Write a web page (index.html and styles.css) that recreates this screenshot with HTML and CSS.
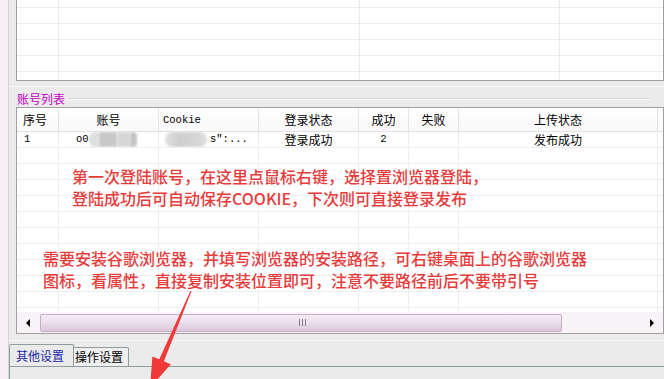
FILE: index.html
```html
<!DOCTYPE html>
<html lang="zh-CN">
<head>
<meta charset="utf-8">
<title>账号列表</title>
<link rel="stylesheet" href="styles.css">
</head>
<body>
<div class="window">
  <div class="frame-left"></div>
  <div class="content">
    <div class="top-area">
      <div class="log-panel">
        <div class="log-row first"><span></span><span></span><span></span><span></span></div>
        <div class="log-row"><span></span><span></span><span></span><span></span></div>
        <div class="log-row"><span></span><span></span><span></span><span></span></div>
        <div class="log-row"><span></span><span></span><span></span><span></span></div>
        <div class="log-row"><span></span><span></span><span></span><span></span></div>
        <div class="log-row last"><span></span><span></span><span></span><span></span></div>
      </div>
    </div>
    <div class="splitter"></div>
    <div class="group-title">
      <span class="group-label">账号列表</span>
      <span class="group-line"></span>
    </div>
    <div class="listview">
      <div class="lv-header">
        <span class="hcell left pad6">序号</span>
        <span class="hcell">账号</span>
        <span class="hcell left pad4 mono">Cookie</span>
        <span class="hcell">登录状态</span>
        <span class="hcell">成功</span>
        <span class="hcell">失败</span>
        <span class="hcell">上传状态</span>
        <span class="hcell end"></span>
      </div>
      <div class="lv-body">
        <div class="lv-row">
          <span class="cell left pad7 mono">1</span>
          <span class="cell left pad17"><span class="mono">o0</span><i class="blob b1"></i><i class="blob b2"></i><i class="blob b3"></i><i class="blob b4"></i></span>
          <span class="cell left pad6"><i class="blob b5"></i><span class="mono tail">s":...</span></span>
          <span class="cell">登录成功</span>
          <span class="cell mono">2</span>
          <span class="cell"></span>
          <span class="cell">发布成功</span>
          <span class="cell end"></span>
        </div>
        <div class="lv-row"><span class="cell"></span><span class="cell"></span><span class="cell"></span><span class="cell"></span><span class="cell"></span><span class="cell"></span><span class="cell"></span><span class="cell end"></span></div>
        <div class="lv-row"><span class="cell"></span><span class="cell"></span><span class="cell"></span><span class="cell"></span><span class="cell"></span><span class="cell"></span><span class="cell"></span><span class="cell end"></span></div>
        <div class="lv-row"><span class="cell"></span><span class="cell"></span><span class="cell"></span><span class="cell"></span><span class="cell"></span><span class="cell"></span><span class="cell"></span><span class="cell end"></span></div>
        <div class="lv-row"><span class="cell"></span><span class="cell"></span><span class="cell"></span><span class="cell"></span><span class="cell"></span><span class="cell"></span><span class="cell"></span><span class="cell end"></span></div>
        <div class="lv-row"><span class="cell"></span><span class="cell"></span><span class="cell"></span><span class="cell"></span><span class="cell"></span><span class="cell"></span><span class="cell"></span><span class="cell end"></span></div>
        <div class="lv-row"><span class="cell"></span><span class="cell"></span><span class="cell"></span><span class="cell"></span><span class="cell"></span><span class="cell"></span><span class="cell"></span><span class="cell end"></span></div>
        <div class="lv-row"><span class="cell"></span><span class="cell"></span><span class="cell"></span><span class="cell"></span><span class="cell"></span><span class="cell"></span><span class="cell"></span><span class="cell end"></span></div>
        <div class="lv-row"><span class="cell"></span><span class="cell"></span><span class="cell"></span><span class="cell"></span><span class="cell"></span><span class="cell"></span><span class="cell"></span><span class="cell end"></span></div>
        <div class="lv-row"><span class="cell"></span><span class="cell"></span><span class="cell"></span><span class="cell"></span><span class="cell"></span><span class="cell"></span><span class="cell"></span><span class="cell end"></span></div>
        <div class="lv-row"><span class="cell"></span><span class="cell"></span><span class="cell"></span><span class="cell"></span><span class="cell"></span><span class="cell"></span><span class="cell"></span><span class="cell end"></span></div>
        <div class="lv-row"><span class="cell"></span><span class="cell"></span><span class="cell"></span><span class="cell"></span><span class="cell"></span><span class="cell"></span><span class="cell"></span><span class="cell end"></span></div>
      </div>
      <div class="hscroll">
        <span class="sb-btn"><i class="tri-left"></i></span>
        <span class="sb-track">
          <span class="sb-thumb"><i class="grip"></i></span>
        </span>
        <span class="sb-btn"><i class="tri-right"></i></span>
      </div>
    </div>
    <div class="tabsep"></div>
    <div class="tabstrip">
      <span class="tab active">其他设置</span>
      <span class="tab">操作设置</span>
    </div>
    <div class="tabpanel"></div>
  </div>
</div>

<div class="annot a1">第一次登陆账号，在这里点鼠标右键，选择置浏览器登陆，<br>登陆成功后可自动保存COOKIE，下次则可直接登录发布</div>
<div class="annot a2">需要安装谷歌浏览器，并填写浏览器的安装路径，可右键桌面上的谷歌浏览器<br>图标，看属性，直接复制安装位置即可，注意不要路径前后不要带引号</div>

<svg class="arrow" width="664" height="379" viewBox="0 0 664 379">
  <polygon points="190.5,290.8 191.5,291.2 163.9,361.3 170.8,364.2 150,388 152.4,356.4 159.3,359.3" fill="#f03a3a"/>
</svg>
</body>
</html>
```

FILE: styles.css
```css
* {
  box-sizing: border-box;
  margin: 0;
  padding: 0;
}

html,
body {
  width: 664px;
  height: 379px;
  overflow: hidden;
}

body {
  position: relative;
  background: #ebebeb;
  font-family: "Noto Sans CJK SC", "Noto Sans", sans-serif;
  font-size: 12px;
  color: #000;
}

.window {
  display: flex;
  height: 379px;
}

.frame-left {
  width: 9px;
  background: #f6f0f6;
  border-right: 1px solid #d4d4d4;
}

.content {
  flex: 1;
  min-width: 0;
  display: flex;
  flex-direction: column;
}

/* top log panel */
.top-area {
  padding-left: 7px;
}

.log-panel {
  height: 81px;
  background: #fff;
  border: 1px solid #a0a0a0;
  border-top: none;
  display: flex;
  flex-direction: column;
}

.log-row {
  display: grid;
  grid-template-columns: 42px 301px 200px 1fr;
  height: 16px;
  border-bottom: 1px solid #ebebeb;
}

.log-row.first {
  height: 8px;
}

.log-row.last {
  height: 8px;
  border-bottom: none;
}

.log-row span {
  border-right: 1px solid #ebebeb;
}

.log-row span:last-child {
  border-right: none;
}

.splitter {
  margin-top: 5px;
  height: 1px;
  background: #f8f8f8;
}

/* group box */
.group-title {
  height: 20px;
  display: flex;
  align-items: flex-start;
  padding-left: 8px;
  padding-top: 5px;
}

.group-label {
  color: #c400c4;
  font-size: 12px;
  line-height: 14px;
}

.group-line {
  flex: 1;
  margin: 6px 14px 0 3px;
  height: 2px;
  border-top: 1px solid #d6d6d6;
  border-bottom: 1px solid #fafafa;
}

/* list view */
.listview {
  margin-left: 7px;
  height: 227px;
  border: 1px solid #a0a0a0;
  background: #fff;
  display: flex;
  flex-direction: column;
}

.lv-header,
.lv-row {
  display: grid;
  grid-template-columns: 42px 100px 100px 100px 50px 50px 199px 1fr;
}

.lv-header {
  height: 24px;
  background: linear-gradient(#ffffff, #faf8fa);
  border-bottom: 1px solid #e3e3e3;
}

.hcell {
  display: flex;
  align-items: center;
  justify-content: center;
  border-right: 1px solid #e3e3e3;
  white-space: nowrap;
}

.lv-body {
  height: 180px;
  overflow: hidden;
}

.lv-row {
  height: 16px;
  border-bottom: 1px solid #ededed;
}

.cell {
  display: flex;
  align-items: center;
  justify-content: center;
  border-right: 1px solid #ededed;
  line-height: 15px;
  white-space: nowrap;
  overflow: hidden;
}

.hcell.end,
.cell.end {
  border-right: none;
}

.left {
  justify-content: flex-start;
}

.pad4 { padding-left: 4px; }
.pad6 { padding-left: 6px; }
.pad7 { padding-left: 7px; }
.pad17 { padding-left: 17px; }

.mono {
  font-family: "Liberation Mono", "DejaVu Sans Mono", monospace;
  font-size: 10.5px;
}

.tail {
  margin-left: 3px;
}

.blob {
  display: inline-block;
  height: 15px;
  filter: blur(1px);
}

.b1 { width: 10px; background: #dedede; border-radius: 6px 0 0 6px; }
.b2 { width: 18px; background: #c8c8c8; }
.b3 { width: 13px; background: #d6d6d6; }
.b4 { width: 7px; background: #c4c4c4; border-radius: 0 4px 4px 0; }
.b5 { width: 42px; background: linear-gradient(90deg, #e2e2e2, #cfcfcf 30%, #d4d4d4 70%, #dedede); border-radius: 7px; }

/* horizontal scrollbar */
.hscroll {
  height: 21px;
  display: flex;
  background: #f7f3f7;
}

.sb-btn {
  width: 22px;
  display: flex;
  align-items: center;
  justify-content: center;
}

.tri-left {
  width: 0;
  height: 0;
  border-top: 4px solid transparent;
  border-bottom: 4px solid transparent;
  border-right: 4px solid #000;
}

.tri-right {
  width: 0;
  height: 0;
  border-top: 4px solid transparent;
  border-bottom: 4px solid transparent;
  border-left: 4px solid #000;
}

.sb-track {
  flex: 1;
  display: flex;
  align-items: center;
  padding-left: 1px;
}

.sb-thumb {
  width: 522px;
  height: 18px;
  border: 1px solid #c6afc6;
  border-radius: 2px;
  background: linear-gradient(#f4eef4, #ebdfeb 45%, #dcc8dc);
  display: flex;
  align-items: center;
  justify-content: center;
}

.grip {
  width: 8px;
  height: 7px;
  margin-left: 4px;
  background: repeating-linear-gradient(90deg, #8a7e8a 0 1px, transparent 1px 3px);
}

/* tabs */
.tabsep {
  margin-top: 6px;
  height: 1px;
  background: #f5f5f5;
}

.tabstrip {
  height: 25px;
  display: flex;
  align-items: flex-end;
}

.tab {
  height: 19px;
  width: 56px;
  margin-left: -1px;
  padding-left: 1px;
  border: 1px solid #8f9c9c;
  border-bottom: none;
  border-radius: 2px 2px 0 0;
  background: #efefef;
  font-size: 12px;
  line-height: 18px;
  white-space: nowrap;
}

.tab.active {
  height: 22px;
  width: 65px;
  margin-left: 0;
  padding-left: 6px;
  line-height: 21px;
  background: #ebebeb;
  color: #1a28a8;
}

.tabpanel {
  flex: 1;
  border-top: 1px solid #8f9c9c;
  border-left: 1px solid #8f9c9c;
}

/* annotations overlaid on the screenshot */
.annot {
  position: absolute;
  color: #e63c3c;
  font-family: "Noto Sans CJK SC", "Noto Sans", sans-serif;
  font-size: 16px;
  font-weight: 500;
  line-height: 22px;
  white-space: nowrap;
}

.a1 {
  left: 72px;
  top: 165px;
}

.a2 {
  left: 43px;
  top: 247px;
}

.arrow {
  position: absolute;
  left: 0;
  top: 0;
  pointer-events: none;
}
```
